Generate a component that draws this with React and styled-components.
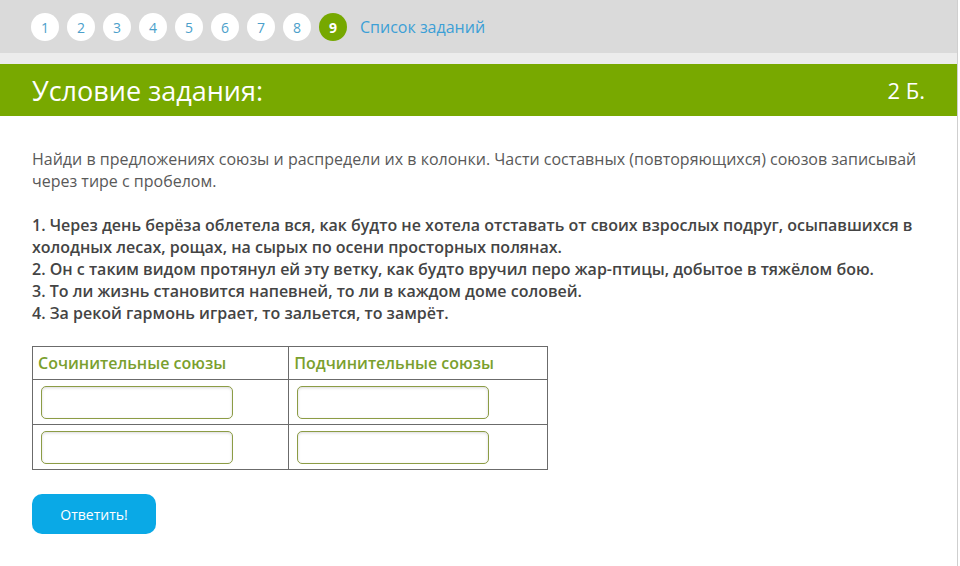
import React from 'react';
import styled, { createGlobalStyle } from 'styled-components';

const GlobalStyle = createGlobalStyle`
  body {
    margin: 0;
    background: #ffffff;
    font-family: "Open Sans", "Liberation Sans", sans-serif;
  }
`;

const Page = styled.div`
  width: 957px;
  min-height: 566px;
  border-right: 1px solid #cfcfcf;
  background: #fff;
`;

const TopBar = styled.div`
  height: 53px;
  background: #dadada;
  display: flex;
  align-items: center;
  padding-left: 31px;
  gap: 8px;
  border-bottom: 11px solid #ececec;
`;

const Step = styled.div`
  width: 28px;
  height: 28px;
  border-radius: 50%;
  background: ${({ active }) => (active ? '#76a800' : '#ffffff')};
  color: ${({ active }) => (active ? '#ffffff' : '#4c9fcb')};
  font-size: 14px;
  font-weight: ${({ active }) => (active ? 700 : 400)};
  display: flex;
  align-items: center;
  justify-content: center;
  margin-top: 1px;
`;

const TaskListLink = styled.a`
  margin-left: 5px;
  font-size: 16px;
  color: #3c9fd6;
  text-decoration: none;
`;

const Header = styled.div`
  height: 52px;
  background: #78a900;
  display: flex;
  align-items: center;
  justify-content: space-between;
  padding: 0 32px;
  color: #fff;
`;

const HeaderTitle = styled.h1`
  margin: 0;
  font-size: 27px;
  font-weight: 400;
`;

const Points = styled.span`
  font-size: 22px;
`;

const Content = styled.div`
  padding: 32px 32px 0;
`;

const Text = styled.p`
  margin: 0 0 22px;
  font-size: 16px;
  line-height: 22px;
  color: ${({ bold }) => (bold ? '#444' : '#595959')};
  font-weight: ${({ bold }) => (bold ? 600 : 400)};
`;

const Table = styled.table`
  border-collapse: collapse;
  margin-top: 1px;
  width: 516px;
`;

const Th = styled.th`
  border: 1px solid #6b6b6b;
  height: 32px;
  text-align: left;
  padding: 0 5px;
  font-size: 16px;
  font-weight: 600;
  color: #7a9f2e;
  width: ${({ w }) => w}px;
`;

const Td = styled.td`
  border: 1px solid #6b6b6b;
  height: 44px;
  padding: 0 8px;
`;

const AnswerInput = styled.input`
  display: block;
  box-sizing: border-box;
  width: 192px;
  height: 33px;
  border: 1px solid #8c9c45;
  border-radius: 5px;
  box-shadow: inset 0 1px 3px rgba(0, 0, 0, 0.15);
  background: #fff;
  outline: none;
`;

const SubmitButton = styled.button`
  margin-top: 24px;
  width: 124px;
  height: 40px;
  border: none;
  border-radius: 10px;
  background: #0aa9e6;
  color: #fff;
  font-family: "Open Sans", "Liberation Sans", sans-serif;
  font-size: 14px;
  cursor: pointer;
`;

const steps = [1, 2, 3, 4, 5, 6, 7, 8, 9];

export default function App() {
  return (
    <>
      <GlobalStyle />
      <Page>
        <TopBar>
          {steps.map((n) => (
            <Step key={n} active={n === 9}>
              {n}
            </Step>
          ))}
          <TaskListLink href="#">Список заданий</TaskListLink>
        </TopBar>
        <Header>
          <HeaderTitle>Условие задания:</HeaderTitle>
          <Points>2 Б.</Points>
        </Header>
        <Content>
          <Text>
            Найди в предложениях союзы и распредели их в колонки. Части составных (повторяющихся) союзов записывай
            через тире с пробелом.
          </Text>
          <Text bold>
            1. Через день берёза облетела вся, как будто не хотела отставать от своих взрослых подруг, осыпавшихся в
            холодных лесах, рощах, на сырых по осени просторных полянах.
            <br />
            2. Он с таким видом протянул ей эту ветку, как будто вручил перо жар-птицы, добытое в тяжёлом бою.
            <br />
            3. То ли жизнь становится напевней, то ли в каждом доме соловей.
            <br />
            4. За рекой гармонь играет, то зальется, то замрёт.
          </Text>
          <Table>
            <thead>
              <tr>
                <Th w={256}>Сочинительные союзы</Th>
                <Th w={259}>Подчинительные союзы</Th>
              </tr>
            </thead>
            <tbody>
              {[0, 1].map((r) => (
                <tr key={r}>
                  <Td>
                    <AnswerInput />
                  </Td>
                  <Td>
                    <AnswerInput />
                  </Td>
                </tr>
              ))}
            </tbody>
          </Table>
          <SubmitButton>Ответить!</SubmitButton>
        </Content>
      </Page>
    </>
  );
}
